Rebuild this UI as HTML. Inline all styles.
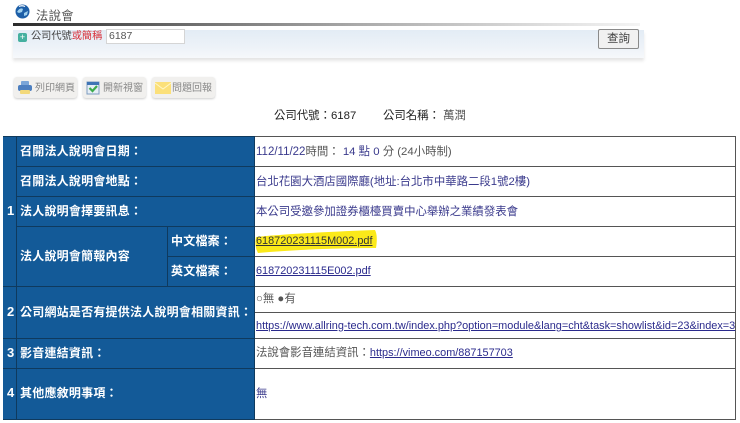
<!DOCTYPE html>
<html lang="zh-Hant"><head><meta charset="utf-8"><title>法說會</title>
<style>
html,body{margin:0;padding:0;background:#fff}
body{width:740px;height:423px;position:relative;overflow:hidden;font-family:"Liberation Sans","Noto Sans CJK TC",sans-serif;color:#444}
.a{position:absolute;white-space:nowrap}
.l{position:absolute;background:#0f3a5e}
.h{position:absolute;background:#555}
.lab{position:absolute;white-space:nowrap;color:#fff;font-weight:bold;font-size:12px;letter-spacing:.22px;line-height:16px}
.n{font-size:13px;letter-spacing:0}
.v{position:absolute;white-space:nowrap;font-size:11.4px;line-height:16px;color:#3a3a8c}
.e{font-size:10.9px}
.g{color:#555}
a{color:#2a2a8c;text-decoration:underline}
.btn{position:absolute;top:77px;height:21px;background:#f1f0ee;border-radius:3px;box-shadow:0 1px 2px #ccc}
.bt{position:absolute;top:82px;font-size:10px;line-height:14px;color:#888;white-space:nowrap}
</style></head><body>

<svg class="a" style="left:15px;top:4px" width="15" height="15" viewBox="0 0 15 15"><circle cx="7.5" cy="7.5" r="7" fill="#1d5fa8"/><path d="M2 8q3-5 6-3l-1 3-3 1zM9 9l4-2-1 4-3 1z" fill="#9fd0ee"/><path d="M4 2.500q3-1.500 6 0" stroke="#fff" stroke-width="1.200" fill="none"/></svg>
<div class="a" style="left:36px;top:9px;font-size:12.3px;line-height:15px;color:#555;letter-spacing:.3px">法說會</div>
<div class="a" style="left:13px;top:23px;width:627px;height:3px;background:linear-gradient(90deg,#2c2c2c,#666 25%,#aaa 55%,#dedede 85%,#f4f4f4)"></div>
<div class="a" style="left:13px;top:30px;width:631px;height:28px;background:linear-gradient(180deg,#e3ecf5,#edf2f8 60%,#f6f8fb);box-shadow:0 3px 3px #e6e6e6"></div>
<div class="a" style="left:18px;top:33px;width:9px;height:9px;border-radius:2px;background:#45b0a0;color:#fff;font-size:9px;line-height:9px;text-align:center">+</div>
<div class="a" style="left:31px;top:30px;font-size:10.2px;line-height:14px;color:#444">公司代號<span style="color:#d8303a">或簡稱</span></div>
<div class="a" style="left:106px;top:29px;width:77px;height:13px;background:#fff;border:1px solid #d5d5d5;font-size:10.5px;line-height:13px;color:#555;text-indent:2px">6187</div>
<div class="a" style="left:598px;top:29px;width:39px;height:18px;background:#f1f1f1;border:1px solid #8a8a8a;border-radius:2px;font-size:11.5px;line-height:18px;text-align:center;color:#444">查詢</div>

<div class="btn" style="left:14px;width:63px"></div>
<div class="btn" style="left:83px;width:63px"></div>
<div class="btn" style="left:152px;width:63px"></div>
<svg class="a" style="left:17px;top:80px" width="16" height="15" viewBox="0 0 16 15"><rect x="4" y="1" width="8" height="5" rx="1" fill="#7aa5d8"/><rect x="1" y="5" width="14" height="6" rx="2" fill="#4d7fc0"/><rect x="3" y="10" width="10" height="4" rx="1" fill="#f3d97a"/></svg>
<svg class="a" style="left:86px;top:81px" width="14" height="14" viewBox="0 0 14 14"><rect x="1" y="1" width="12" height="12" fill="#e6eef6" stroke="#7d9cc0"/><rect x="1" y="1" width="12" height="3" fill="#3f74b5"/><path d="M3.500 7l3 3 4.500-5" stroke="#3cab4c" stroke-width="2.200" fill="none"/></svg>
<svg class="a" style="left:155px;top:82px" width="16" height="12" viewBox="0 0 16 12"><rect width="16" height="12" fill="#fbe07a"/><path d="M0 1l8 6 8-6" stroke="#fff6c8" fill="none"/></svg>
<div class="bt" style="left:35px">列印網頁</div>
<div class="bt" style="left:103px">開新視窗</div>
<div class="bt" style="left:172px">問題回報</div>

<div class="a" style="left:274px;top:108px;font-size:11.4px;line-height:16px;color:#222">公司代號：6187</div>
<div class="a" style="left:383px;top:108px;font-size:11.4px;line-height:16px;color:#222">公司名稱： <span style="color:#555">萬潤</span></div>

<div class="a" style="left:3px;top:136px;width:733px;height:284px;background:#fff;box-sizing:border-box;border:1px solid #555"></div>
<div class="a" style="left:3px;top:136px;width:252px;height:284px;background:#135a98"></div>

<div class="l" style="left:3px;top:136px;width:252px;height:1px"></div>
<div class="l" style="left:3px;top:419px;width:252px;height:1px"></div>
<div class="l" style="left:16px;top:136px;width:1px;height:284px"></div>
<div class="l" style="left:254px;top:136px;width:1px;height:284px"></div>
<div class="l" style="left:167px;top:226px;width:1px;height:60px"></div>
<div class="l" style="left:16px;top:166px;width:238px;height:1px"></div>
<div class="l" style="left:16px;top:196px;width:238px;height:1px"></div>
<div class="l" style="left:16px;top:226px;width:238px;height:1px"></div>
<div class="l" style="left:167px;top:256px;width:87px;height:1px"></div>
<div class="l" style="left:3px;top:286px;width:252px;height:1px"></div>
<div class="l" style="left:3px;top:338px;width:252px;height:1px"></div>
<div class="l" style="left:3px;top:368px;width:252px;height:1px"></div>

<div class="h" style="left:255px;top:166px;width:481px;height:1px"></div>
<div class="h" style="left:255px;top:196px;width:481px;height:1px"></div>
<div class="h" style="left:255px;top:226px;width:481px;height:1px"></div>
<div class="h" style="left:255px;top:256px;width:481px;height:1px"></div>
<div class="h" style="left:255px;top:286px;width:481px;height:1px"></div>
<div class="h" style="left:255px;top:312px;width:481px;height:1px"></div>
<div class="h" style="left:255px;top:338px;width:481px;height:1px"></div>
<div class="h" style="left:255px;top:368px;width:481px;height:1px"></div>

<div class="lab n" style="left:7px;top:203px">1</div>
<div class="lab n" style="left:7px;top:304px">2</div>
<div class="lab n" style="left:7px;top:345px">3</div>
<div class="lab n" style="left:7px;top:385px">4</div>

<div class="lab" style="left:20px;top:143px">召開法人說明會日期：</div>
<div class="lab" style="left:20px;top:173px">召開法人說明會地點：</div>
<div class="lab" style="left:20px;top:203px">法人說明會擇要訊息：</div>
<div class="lab" style="left:20px;top:248px">法人說明會簡報內容</div>
<div class="lab" style="left:171px;top:233px">中文檔案：</div>
<div class="lab" style="left:171px;top:263px">英文檔案：</div>
<div class="lab" style="left:20px;top:304px">公司網站是否有提供法人說明會相關資訊：</div>
<div class="lab" style="left:20px;top:345px">影音連結資訊：</div>
<div class="lab" style="left:20px;top:385px">其他應敘明事項：</div>

<div class="v" style="left:256px;top:144px"><span style="font-size:11.5px">112/11/22</span><span class="g">時間： </span>14 點 0 <span class="g">分 (24小時制)</span></div>
<div class="v" style="left:256px;top:174px">台北花園大酒店國際廳(地址:台北市中華路二段1號2樓)</div>
<div class="v" style="left:256px;top:204px">本公司受邀參加證券櫃檯買賣中心舉辦之業績發表會</div>
<svg class="a" style="left:254px;top:228px" width="124" height="27" viewBox="0 0 124 27"><path d="M2 9Q40 5 121 2Q124 8 122 20Q60 20 4 25Q0 18 2 9Z" fill="#fbe91a"/></svg>
<div class="v e" style="left:256px;top:233px"><a href="#" style="color:#333">618720231115M002.pdf</a></div>
<div class="v e" style="left:256px;top:263px"><a href="#">618720231115E002.pdf</a></div>
<div class="v g" style="left:256px;top:291px">○無 ●有</div>
<div class="v" style="left:256px;top:318px;font-size:10.92px"><a href="#">https://www.allring-tech.com.tw/index.php?option=module&amp;lang=cht&amp;task=showlist&amp;id=23&amp;index=3</a></div>
<div class="v g" style="left:256px;top:345px">法說會影音連結資訊：<a href="#" class="e">https://vimeo.com/887157703</a></div>
<div class="v" style="left:256px;top:386px">無</div>

</body></html>
